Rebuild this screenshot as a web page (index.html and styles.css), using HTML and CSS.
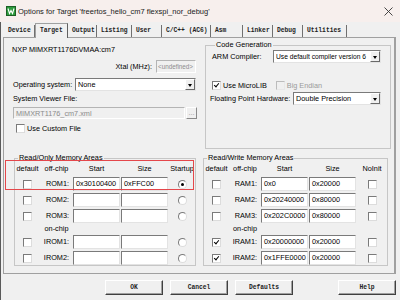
FILE: index.html
```html
<!DOCTYPE html>
<html lang="en">
<head>
  <meta charset="UTF-8">
  <meta name="viewport" content="width=device-width, initial-scale=1.0">
  <title>Options for Target</title>
  <link rel="stylesheet" href="styles.css">
</head>
<body>

<div class="window">
  <div class="titlebar">
    <svg class="app-icon" viewBox="0 0 10 10">
      <rect x="0.5" y="0.5" width="9" height="9" fill="#2e9b3e" stroke="#1c5f24"/>
      <path d="M2 2.5 L3.5 7.5 L5 4.5 L6.5 7.5 L8 2.5" fill="none" stroke="#fff" stroke-width="1.1"/>
    </svg>
    <span class="title">Options for Target 'freertos_hello_cm7 flexspi_nor_debug'</span>
    <svg class="close" viewBox="0 0 9 9">
      <path d="M0.5 0.5 L8.5 8.5 M8.5 0.5 L0.5 8.5" stroke="#333" stroke-width="0.9"/>
    </svg>
  </div>

  <div class="frame">
    <div class="tabs">
      <div class="tab t-device">Device</div>
      <div class="tab t-target active">Target</div>
      <div class="tab t-output">Output</div>
      <div class="tab t-listing">Listing</div>
      <div class="tab t-user">User</div>
      <div class="tab t-cc">C/C++ (AC6)</div>
      <div class="tab t-asm">Asm</div>
      <div class="tab t-linker">Linker</div>
      <div class="tab t-debug">Debug</div>
      <div class="tab t-util">Utilities</div>
    </div>

    <div class="panel">
      <div class="col-left">
        <div class="device">NXP MIMXRT1176DVMAA:cm7</div>

        <div class="row xtal">
          <span>Xtal (MHz):</span>
          <div class="edit disabled w-xtal">&lt;undefined&gt;</div>
        </div>

        <div class="row os">
          <span>Operating system:</span>
          <div class="combo w-os"><span>None</span><i class="drop"></i></div>
        </div>

        <div class="caption">System Viewer File:</div>
        <div class="row svf">
          <div class="edit disabled w-svf">MIMXRT1176_cm7.xml</div>
          <div class="browse">...</div>
        </div>

        <div class="check-row custom">
          <i class="cb"></i><span>Use Custom File</span>
        </div>

        <fieldset class="group mem rom">
          <legend>Read/Only Memory Areas</legend>
          <div class="mem-grid">
            <span class="hd">default</span><span class="hd">off-chip</span><span class="hd">Start</span><span class="hd">Size</span><span class="hd">Startup</span>

            <span class="cell"><i class="cb"></i></span><span class="name">ROM1:</span><div class="edit">0x30100400</div><div class="edit">0xFFC00</div><span class="cell"><i class="radio on"></i></span>
            <span class="cell"><i class="cb"></i></span><span class="name">ROM2:</span><div class="edit"></div><div class="edit"></div><span class="cell"><i class="radio"></i></span>
            <span class="cell"><i class="cb"></i></span><span class="name">ROM3:</span><div class="edit"></div><div class="edit"></div><span class="cell"><i class="radio"></i></span>

            <span></span><span class="hd onchip">on-chip</span><span></span><span></span><span></span>

            <span class="cell"><i class="cb"></i></span><span class="name">IROM1:</span><div class="edit"></div><div class="edit"></div><span class="cell"><i class="radio"></i></span>
            <span class="cell"><i class="cb"></i></span><span class="name">IROM2:</span><div class="edit"></div><div class="edit"></div><span class="cell"><i class="radio"></i></span>
          </div>
        </fieldset>
      </div>

      <div class="col-right">
        <fieldset class="group codegen">
          <legend>Code Generation</legend>
          <div class="row arm">
            <span>ARM Compiler:</span>
            <div class="combo w-arm"><span>Use default compiler version 6</span><i class="drop"></i></div>
          </div>
          <div class="check-row libs">
            <i class="cb checked"></i><span class="lib-label">Use MicroLIB</span>
            <i class="cb disabled"></i><span class="muted">Big Endian</span>
          </div>
          <div class="row fph">
            <span>Floating Point Hardware:</span>
            <div class="combo w-fph"><span>Double Precision</span><i class="drop"></i></div>
          </div>
        </fieldset>

        <fieldset class="group mem ram">
          <legend>Read/Write Memory Areas</legend>
          <div class="mem-grid">
            <span class="hd">default</span><span class="hd">off-chip</span><span class="hd">Start</span><span class="hd">Size</span><span class="hd">NoInit</span>

            <span class="cell"><i class="cb"></i></span><span class="name">RAM1:</span><div class="edit">0x0</div><div class="edit">0x20000</div><span class="cell"><i class="cb"></i></span>
            <span class="cell"><i class="cb"></i></span><span class="name">RAM2:</span><div class="edit">0x20240000</div><div class="edit">0x80000</div><span class="cell"><i class="cb"></i></span>
            <span class="cell"><i class="cb"></i></span><span class="name">RAM3:</span><div class="edit">0x202C0000</div><div class="edit">0x80000</div><span class="cell"><i class="cb"></i></span>

            <span></span><span class="hd onchip">on-chip</span><span></span><span></span><span></span>

            <span class="cell"><i class="cb checked"></i></span><span class="name">IRAM1:</span><div class="edit">0x20000000</div><div class="edit">0x20000</div><span class="cell"><i class="cb"></i></span>
            <span class="cell"><i class="cb checked"></i></span><span class="name">IRAM2:</span><div class="edit">0x1FFE0000</div><div class="edit">0x20000</div><span class="cell"><i class="cb"></i></span>
          </div>
        </fieldset>
      </div>
    </div>

    <div class="buttons">
      <div class="btn default">OK</div>
      <div class="btn">Cancel</div>
      <div class="btn">Defaults</div>
      <div class="btn help">Help</div>
    </div>
  </div>

  <div class="highlight"></div>
</div>

</body>
</html>
```

FILE: styles.css
```css
* {
  box-sizing: border-box;
}

body {
  margin: 0;
  background: #f0f0f0;
  font-family: "Liberation Sans", Arial, sans-serif;
  font-size: 7.3px;
  color: #000;
}

.window {
  position: relative;
  width: 400px;
  height: 300px;
  overflow: hidden;
  background: #f0f0f0;
}

/* title bar */
.titlebar {
  height: 22px;
  display: flex;
  align-items: center;
  padding: 0 7px 0 6px;
  background: #f7efed;
}

.app-icon {
  width: 10px;
  height: 10px;
  margin-right: 2px;
}

.title {
  flex: 1;
  font-size: 7.5px;
  color: #1a1a1a;
}

.close {
  width: 9px;
  height: 9px;
}

.frame {
  height: 278px;
  border-left: 1px solid #5a5a5a;
  padding: 0 4px 0 2px;
  display: flex;
  flex-direction: column;
}

/* tabs */
.tabs {
  height: 15px;
  display: flex;
  align-items: flex-end;
  padding-left: 1px;
}

.tab {
  height: 12px;
  line-height: 12px;
  padding-left: 4px;
  font-family: "Liberation Mono", "DejaVu Sans Mono", monospace;
  font-size: 6.3px;
  font-weight: bold;
  color: #222;
  border-right: 1px solid #707070;
  white-space: nowrap;
  overflow: hidden;
}

.tab.active {
  position: relative;
  height: 15px;
  line-height: 13px;
  margin-bottom: -1px;
  background: #f0f0f0;
  border: 1px solid #a0a0a0;
  border-bottom: none;
  border-right-color: #606060;
  z-index: 1;
}

.t-device { width: 31px; }
.t-target { width: 33px; }
.t-output { width: 29px; }
.t-listing { width: 35px; }
.t-user { width: 30px; }
.t-cc { width: 49px; }
.t-asm { width: 32px; }
.t-linker { width: 30px; }
.t-debug { width: 30px; }
.t-util { width: 44px; }

/* panel */
.panel {
  height: 237px;
  display: flex;
  border: 1px solid #a0a0a0;
  border-right-width: 2px;
}

.col-left {
  width: 194px;
  padding: 7px 1px 0 9px;
}

.col-right {
  flex: 1;
  padding: 2px 3px 0 5px;
}

.row {
  display: flex;
  align-items: center;
}

.device {
  line-height: 10px;
  margin-left: -1px;
}

.xtal {
  margin-top: 5px;
  height: 13px;
  justify-content: flex-end;
  gap: 4px;
  padding-right: 1px;
}

.os {
  margin-top: 5px;
  height: 13px;
  justify-content: space-between;
  padding-right: 1px;
}

.caption {
  margin-top: 3px;
  line-height: 10px;
}

.svf {
  margin-top: 3px;
  height: 12px;
  gap: 1px;
}

.check-row {
  display: flex;
  align-items: center;
  height: 11px;
}

.custom {
  margin-top: 4px;
  padding-left: 3px;
  gap: 2px;
}

/* controls */
.edit {
  height: 100%;
  padding: 1px 0 0 2px;
  line-height: 10px;
  background: #fff;
  border: 1px solid;
  border-color: #7a7a7a #e3e3e3 #e3e3e3 #7a7a7a;
  white-space: nowrap;
  overflow: hidden;
}

.edit.disabled {
  background: #f0f0f0;
  color: #8c8c8c;
  border-color: #b4b4b4 #fff #fff #b4b4b4;
}

.w-xtal {
  width: 40px;
  padding-left: 1px;
  font-size: 6.3px;
}

.w-svf { width: 172px; }
.w-os { width: 121px; }
.w-arm { width: 108px; }
.w-fph { width: 88px; }

.w-arm span {
  font-size: 6.7px;
}

.combo {
  height: 100%;
  display: flex;
  align-items: center;
  padding-left: 2px;
  background: #fff;
  border: 1px solid;
  border-color: #7a7a7a #e3e3e3 #e3e3e3 #7a7a7a;
}

.combo span {
  flex: 1;
  white-space: nowrap;
  overflow: hidden;
}

.drop {
  position: relative;
  flex: none;
  width: 10px;
  height: 100%;
  background: #f0f0f0;
  border: 1px solid;
  border-color: #fff #696969 #696969 #fff;
}

.drop::after {
  content: "";
  position: absolute;
  left: 2px;
  top: 4px;
  border-left: 2.5px solid transparent;
  border-right: 2.5px solid transparent;
  border-top: 3px solid #000;
}

.browse {
  width: 11px;
  height: 100%;
  text-align: center;
  line-height: 9px;
  color: #9a9a9a;
  background: #f0f0f0;
  border: 1px solid;
  border-color: #fff #8a8a8a #8a8a8a #fff;
}

.cb {
  position: relative;
  display: inline-block;
  flex: none;
  width: 9px;
  height: 9px;
  background: #fff;
  border: 1px solid;
  border-color: #7a7a7a #dcdcdc #dcdcdc #7a7a7a;
}

.cb.checked::after {
  content: "";
  position: absolute;
  left: 2px;
  top: 0;
  width: 2px;
  height: 4px;
  border-right: 1.5px solid #000;
  border-bottom: 1.5px solid #000;
  transform: rotate(40deg);
}

.cb.disabled {
  background: #f0f0f0;
  border-color: #bcbcbc #e8e8e8 #e8e8e8 #bcbcbc;
}

.radio {
  position: relative;
  display: inline-block;
  width: 9px;
  height: 9px;
  border-radius: 50%;
  background: #fff;
  border: 1px solid;
  border-color: #7a7a7a #dcdcdc #dcdcdc #7a7a7a;
}

.radio.on::after {
  content: "";
  position: absolute;
  left: 2px;
  top: 2px;
  width: 3px;
  height: 3px;
  border-radius: 50%;
  background: #000;
}

.muted {
  color: #9a9a9a;
}

/* group boxes */
fieldset.group {
  margin: 0;
  padding: 0;
  min-width: 0;
  border: 1px solid #c6c6c6;
}

fieldset.group legend {
  margin-left: 3px;
  padding: 0 1px;
  line-height: 10px;
}

fieldset.rom {
  margin: 19px 1px 0 1px;
}

fieldset.codegen {
  margin-left: 2px;
  padding: 0 9px 43px 6px;
}

.arm {
  height: 13px;
  justify-content: space-between;
}

.libs {
  margin-top: 17px;
}

.lib-label {
  margin: 0 9px 0 2px;
}

.libs .muted {
  margin-left: 2px;
}

.fph {
  margin: 1px 0 0 -2px;
  height: 13px;
  justify-content: space-between;
}

fieldset.ram {
  margin: 4px 3px 0 0;
}

.mem-grid {
  display: grid;
  grid-template-columns: 25px 31px 47px 47px 1fr;
  grid-template-rows: 12px repeat(3, 14px) 8px repeat(2, 14px);
  column-gap: 1px;
  row-gap: 2px;
}

.ram .mem-grid {
  grid-template-columns: 25px 30px 47px 47px 1fr;
}

.hd {
  text-align: center;
  line-height: 12px;
}

.onchip {
  line-height: 8px;
}

.name {
  text-align: right;
  padding-right: 3px;
  line-height: 14px;
}

.cell {
  display: flex;
  align-items: center;
  justify-content: center;
}

/* bottom buttons */
.buttons {
  height: 26px;
  display: flex;
  gap: 7px;
  padding: 6px 0 0 102px;
}

.btn {
  width: 58px;
  height: 15px;
  line-height: 13px;
  text-align: center;
  font-family: "Liberation Mono", "DejaVu Sans Mono", monospace;
  font-size: 6.3px;
  font-weight: bold;
  color: #222;
  background: #f0f0f0;
  border: 1px solid;
  border-color: #fff #404040 #404040 #fff;
  box-shadow: inset -1px -1px 0 #a0a0a0;
}

.btn.help {
  margin-left: auto;
}

/* red annotation drawn over the dialog */
.highlight {
  position: absolute;
  left: 5px;
  top: 160px;
  width: 189px;
  height: 30px;
  border: 1px solid #e4474b;
}
```
